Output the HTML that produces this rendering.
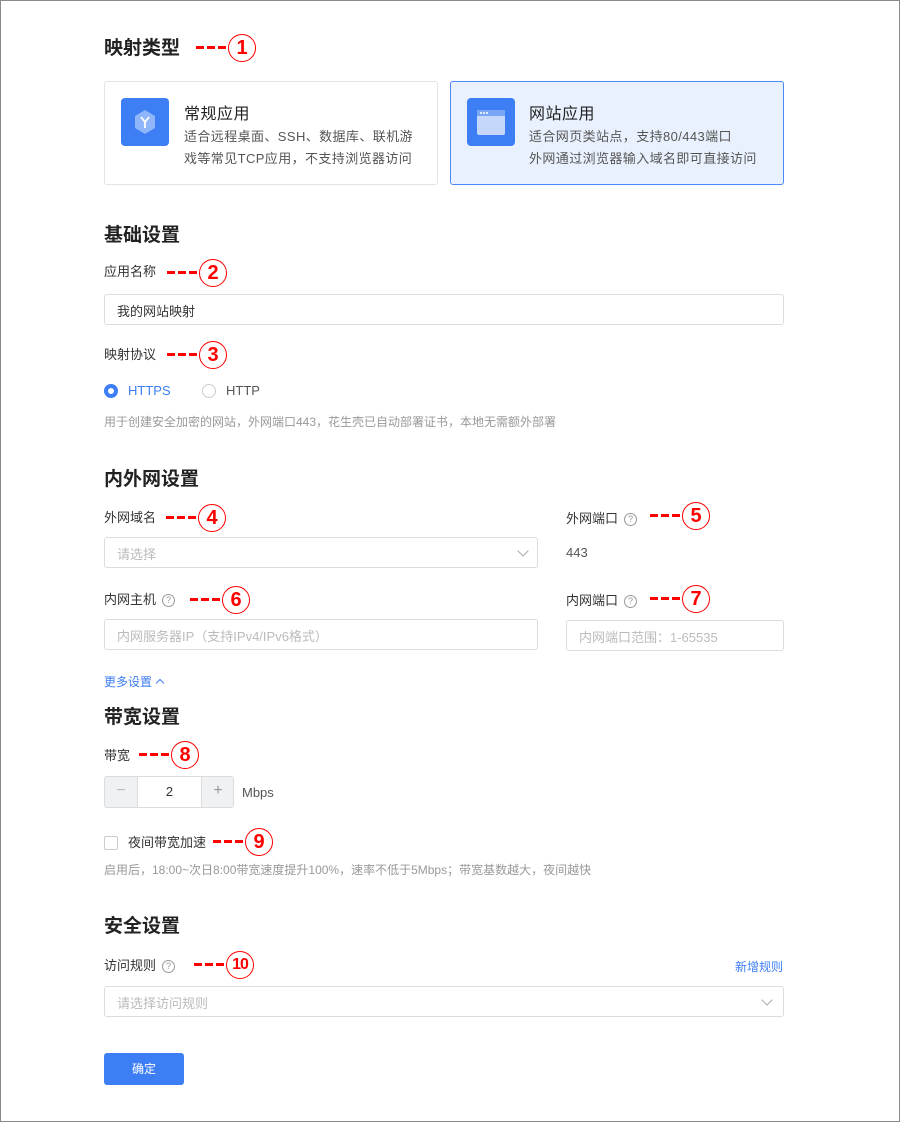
<!DOCTYPE html>
<html><head><meta charset="utf-8"><style>
*{box-sizing:border-box;margin:0;padding:0}
body{width:900px;height:1122px;background:#fff;font-family:"Liberation Sans","Noto Sans CJK SC",sans-serif;color:#333;position:relative;overflow:hidden}
.frame{position:absolute;left:0;top:0;width:900px;height:1122px;border:1px solid #8a8a8a}
.a{position:absolute;white-space:nowrap}
.h{font-size:19px;font-weight:bold;color:#222;line-height:24px}
.l{font-size:13px;color:#333;line-height:18px}
.g{font-size:12px;color:#999;line-height:16px}
.box{position:absolute;border:1px solid #dcdcdc;border-radius:3px;background:#fff}
.ph{font-size:13px;color:#bbb;position:absolute;left:12px;top:6px}
.ann{position:absolute;height:28px;width:70px}
.ann i{position:absolute;top:12px;width:8px;height:3px;background:#f00}
.ann b{position:absolute;left:32px;top:0;width:28px;height:28px;border:1.6px solid #f00;border-radius:50%;color:#f00;font-size:20px;font-weight:bold;display:flex;align-items:center;justify-content:center;line-height:1;font-family:"Liberation Sans",sans-serif}
.q{display:inline-block;width:13px;height:13px;border:1px solid #999;border-radius:50%;font-size:9px;line-height:11px;text-align:center;color:#999;vertical-align:1px;margin-left:6px}
.chev{position:absolute;width:8px;height:8px;border-right:1px solid #aaa;border-bottom:1px solid #aaa;transform:rotate(45deg)}
.desc{font-size:13px;color:#555;line-height:22px;letter-spacing:0.4px}
</style></head><body>
<div class="frame"></div>

<div class="a h" style="left:104px;top:37px">映射类型</div>
<div class="ann" style="left:196px;top:34px"><i style="left:0"></i><i style="left:11px"></i><i style="left:22px"></i><b>1</b></div>

<div class="box" style="left:104px;top:81px;width:334px;height:104px;border-color:#e4e4e4"></div>
<div class="a" style="left:121px;top:98px;width:48px;height:48px;background:#3d7ef5;border-radius:4px">
<svg width="48" height="48"><polygon points="24,12 34,18 34,30 24,36 14,30 14,18" fill="#8fb5fa"/><path d="M20 19 L24 24 L28 19 M24 24 V30" stroke="#fff" stroke-width="1.8" fill="none"/></svg></div>
<div class="a" style="left:184px;top:100px;font-size:16px;color:#222;letter-spacing:0.5px">常规应用</div>
<div class="a desc" style="left:184px;top:126px">适合远程桌面、SSH、数据库、联机游<br>戏等常见TCP应用，不支持浏览器访问</div>

<div class="box" style="left:450px;top:81px;width:334px;height:104px;background:#eaf1fe;border-color:#4d88f7"></div>
<div class="a" style="left:467px;top:98px;width:48px;height:48px;background:#3d7ef5;border-radius:4px">
<svg width="48" height="48"><rect x="10" y="12" width="28" height="25" rx="2" fill="#c5d8fc"/><rect x="10" y="12" width="28" height="6" fill="#7aa6f8"/><circle cx="14" cy="15" r="1" fill="#fff"/><circle cx="17" cy="15" r="1" fill="#fff"/><circle cx="20" cy="15" r="1" fill="#fff"/></svg></div>
<div class="a" style="left:529px;top:100px;font-size:16px;color:#222;letter-spacing:0.5px">网站应用</div>
<div class="a desc" style="left:529px;top:126px">适合网页类站点，支持80/443端口<br>外网通过浏览器输入域名即可直接访问</div>

<div class="a h" style="left:104px;top:224px">基础设置</div>
<div class="a l" style="left:104px;top:263px">应用名称</div>
<div class="ann" style="left:167px;top:259px"><i style="left:0"></i><i style="left:11px"></i><i style="left:22px"></i><b>2</b></div>
<div class="box" style="left:104px;top:294px;width:680px;height:31px"><span class="ph" style="color:#333">我的网站映射</span></div>

<div class="a l" style="left:104px;top:346px">映射协议</div>
<div class="ann" style="left:167px;top:341px"><i style="left:0"></i><i style="left:11px"></i><i style="left:22px"></i><b>3</b></div>
<div class="a" style="left:104px;top:384px;width:14px;height:14px;border-radius:50%;background:#3d7ef5"><div style="position:absolute;left:4px;top:4px;width:6px;height:6px;border-radius:50%;background:#fff"></div></div>
<div class="a" style="left:128px;top:383px;font-size:13px;color:#3d7ef5">HTTPS</div>
<div class="a" style="left:202px;top:384px;width:14px;height:14px;border-radius:50%;border:1px solid #ccc"></div>
<div class="a" style="left:226px;top:383px;font-size:13px;color:#555">HTTP</div>
<div class="a g" style="left:104px;top:414px">用于创建安全加密的网站，外网端口443，花生壳已自动部署证书，本地无需额外部署</div>

<div class="a h" style="left:104px;top:468px">内外网设置</div>
<div class="a l" style="left:104px;top:509px">外网域名</div>
<div class="ann" style="left:166px;top:504px"><i style="left:0"></i><i style="left:11px"></i><i style="left:22px"></i><b>4</b></div>
<div class="a l" style="left:566px;top:510px">外网端口<span class="q">?</span></div>
<div class="ann" style="left:650px;top:502px"><i style="left:0"></i><i style="left:11px"></i><i style="left:22px"></i><b>5</b></div>
<div class="box" style="left:104px;top:537px;width:434px;height:31px"><span class="ph">请选择</span><div class="chev" style="left:414px;top:9px"></div></div>
<div class="a" style="left:566px;top:545px;font-size:13px;color:#555">443</div>

<div class="a l" style="left:104px;top:591px">内网主机<span class="q">?</span></div>
<div class="ann" style="left:190px;top:586px"><i style="left:0"></i><i style="left:11px"></i><i style="left:22px"></i><b>6</b></div>
<div class="a l" style="left:566px;top:592px">内网端口<span class="q">?</span></div>
<div class="ann" style="left:650px;top:585px"><i style="left:0"></i><i style="left:11px"></i><i style="left:22px"></i><b>7</b></div>
<div class="box" style="left:104px;top:619px;width:434px;height:31px"><span class="ph">内网服务器IP（支持IPv4/IPv6格式）</span></div>
<div class="box" style="left:566px;top:620px;width:218px;height:31px"><span class="ph">内网端口范围：1-65535</span></div>

<div class="a" style="left:104px;top:673px;font-size:12px;color:#3d7ef5">更多设置 <span style="display:inline-block;width:6px;height:6px;border-left:1px solid #3d7ef5;border-top:1px solid #3d7ef5;transform:rotate(45deg);vertical-align:0px;margin-left:2px"></span></div>

<div class="a h" style="left:104px;top:706px">带宽设置</div>
<div class="a l" style="left:104px;top:747px">带宽</div>
<div class="ann" style="left:139px;top:741px"><i style="left:0"></i><i style="left:11px"></i><i style="left:22px"></i><b>8</b></div>
<div class="box" style="left:104px;top:776px;width:130px;height:32px;overflow:hidden">
<div style="position:absolute;left:0;top:0;width:33px;height:30px;background:#f0f1f3;border-right:1px solid #dcdcdc;text-align:center;line-height:28px;color:#bbb;font-size:16px">−</div>
<div style="position:absolute;left:33px;top:0;width:63px;height:30px;text-align:center;line-height:30px;font-size:13px">2</div>
<div style="position:absolute;left:96px;top:0;width:33px;height:30px;background:#f0f1f3;border-left:1px solid #dcdcdc;text-align:center;line-height:28px;color:#999;font-size:16px">+</div></div>
<div class="a" style="left:242px;top:785px;font-size:13px;color:#555">Mbps</div>

<div class="a" style="left:104px;top:836px;width:14px;height:14px;border:1px solid #ccc;border-radius:2px"></div>
<div class="a l" style="left:128px;top:834px">夜间带宽加速</div>
<div class="ann" style="left:213px;top:828px"><i style="left:0"></i><i style="left:11px"></i><i style="left:22px"></i><b>9</b></div>
<div class="a g" style="left:104px;top:862px">启用后，18:00~次日8:00带宽速度提升100%，速率不低于5Mbps；带宽基数越大，夜间越快</div>

<div class="a h" style="left:104px;top:915px">安全设置</div>
<div class="a l" style="left:104px;top:957px">访问规则<span class="q">?</span></div>
<div class="ann" style="left:194px;top:951px"><i style="left:0"></i><i style="left:11px"></i><i style="left:22px"></i><b style="font-size:16px;letter-spacing:-1px">10</b></div>
<div class="a" style="left:735px;top:958px;font-size:12px;color:#3d7ef5">新增规则</div>
<div class="box" style="left:104px;top:986px;width:680px;height:31px"><span class="ph">请选择访问规则</span><div class="chev" style="left:658px;top:9px"></div></div>

<div class="a" style="left:104px;top:1053px;width:80px;height:32px;background:#3d7ef5;border-radius:3px;color:#fff;font-size:12px;text-align:center;line-height:32px">确定</div>
</body></html>
